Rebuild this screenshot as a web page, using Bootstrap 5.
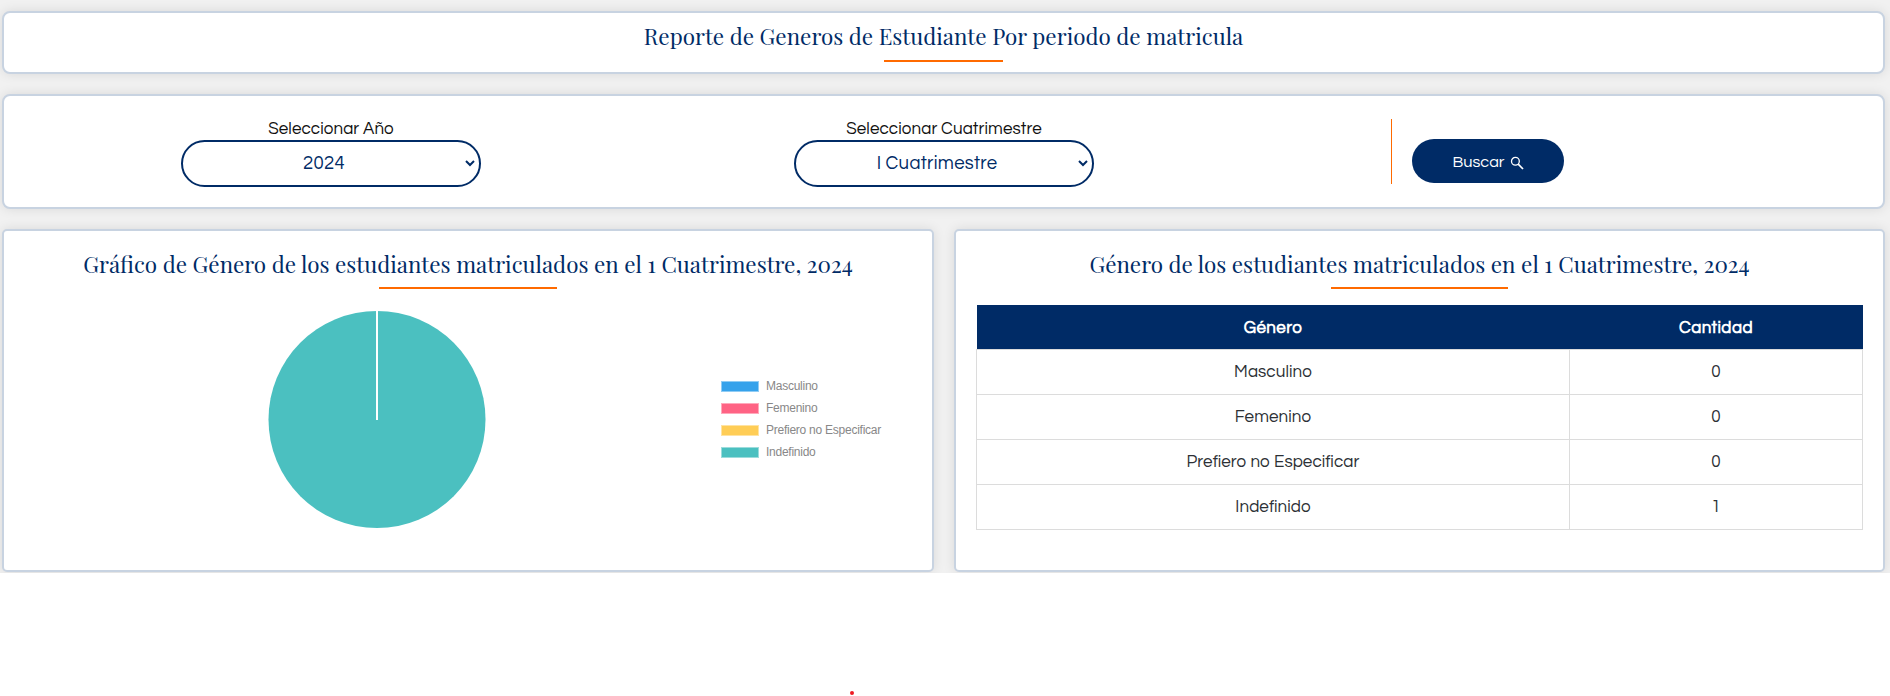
<!DOCTYPE html>
<html lang="es">
<head>
<meta charset="utf-8">
<title>Reporte de Generos</title>
<link href="https://cdn.jsdelivr.net/npm/bootstrap@5.3.0/dist/css/bootstrap.min.css" rel="stylesheet">
<style>
:root{--navy:#002b66;--accent:#ff6a00;--line:#c8d3e1}
body{font-family:"Century Gothic","URW Gothic","Questrial","Didact Gothic",Lato,"Liberation Sans",sans-serif;font-weight:300;font-size:16px;color:#212529;background:#fff;overflow:hidden}
.report{background:#f1f1f1;padding:11px 5px 1px 2px;height:573px;overflow:hidden}
.panel{background:#fff;border:2px solid var(--line);border-radius:8px;box-shadow:0 0 12px rgba(0,0,0,.1)}
.panel-title{height:63px;margin-bottom:20px;padding-top:5px}
.panel-filter{height:115px;margin-bottom:20px}
.panel-data{height:343px;border-radius:5px;padding:15px 20px 0}
.heading{font:400 22.4px/36px "Playfair Display","Liberation Serif",serif;color:var(--navy);margin:0;text-align:center;white-space:nowrap}
.rule{height:2px;background:var(--accent);margin:0 auto}
.filters{display:grid;grid-template-columns:654px 572px 1fr;height:100%}
.filters .field{padding-top:20px}
.field label{display:block;line-height:26px;height:24px;font-size:17px;letter-spacing:.1px;color:#111}
.pick{width:300px;height:47px;border:2px solid var(--navy);border-radius:24px;color:var(--navy);font-size:18.5px;letter-spacing:.3px;padding:0 4px 0 0}
.pick .value{flex:1;padding-top:1px}
.divider{width:1px;height:65px;background:var(--accent);margin-top:23px}
.btn-search{width:152px;height:44px;border-radius:22px;background:var(--navy);color:#fff;margin:43px 0 0 20px;padding:2px 0 0;font-size:16.3px;font-weight:400;border:0}
.btn-search:hover{background:#013a87;color:#fff}
.legend-list{font:300 12px/22px "Liberation Sans",sans-serif;color:#888;width:180px;letter-spacing:-.25px;margin-top:86px}
.swatch{width:38px;height:11px;margin-right:7px;border:1px solid rgba(255,255,255,.45)}
.counts{width:887px;margin:16px 0 0;border-collapse:collapse;text-align:center;table-layout:fixed}
.counts th{background:var(--navy);color:#fff;height:44px;padding:3px 0 0;font-weight:700;font-size:17px;letter-spacing:.4px;vertical-align:middle}
.counts td{border:1px solid #dcdcdc;height:45px;padding:3px 0 0;vertical-align:middle;color:#2c3035;font-size:17px;letter-spacing:.08px}
.dot{width:4px;height:4px;border-radius:50%;background:#ed1c24;margin:118px 0 0 850px}
</style>
</head>
<body>
<main class="report">
  <section class="panel panel-title">
    <h1 class="heading">Reporte de Generos de Estudiante Por periodo de matricula</h1>
    <div class="rule" style="width:119px;margin-top:6px"></div>
  </section>
  <section class="panel panel-filter">
    <div class="filters">
      <div class="field d-flex flex-column align-items-center">
        <label>Seleccionar Año</label>
        <div class="pick d-flex align-items-center text-center" role="button"><span class="value">2024</span>
          <svg width="10" height="7" viewBox="0 0 10 7" fill="none" stroke="#002b66" stroke-width="2"><path d="M1 1l4 4 4-4"/></svg></div>
      </div>
      <div class="field d-flex flex-column align-items-center">
        <label>Seleccionar Cuatrimestre</label>
        <div class="pick d-flex align-items-center text-center" role="button"><span class="value">I Cuatrimestre</span>
          <svg width="10" height="7" viewBox="0 0 10 7" fill="none" stroke="#002b66" stroke-width="2"><path d="M1 1l4 4 4-4"/></svg></div>
      </div>
      <div class="d-flex align-items-start" style="padding-left:161px">
        <div class="divider"></div>
        <button class="btn btn-search d-flex align-items-center justify-content-center" type="button">Buscar
          <svg style="margin:1px 0 0 5px" width="14" height="14" viewBox="0 0 14 14" fill="none" stroke="#fff" stroke-width="1.3"><circle cx="5.4" cy="5.2" r="3.9"/><path d="M8.2 8.1l4.8 4.9" stroke-width="1.7"/></svg></button>
      </div>
    </div>
  </section>
  <section class="d-flex justify-content-between">
    <div class="panel panel-data" style="width:932px">
      <h2 class="heading">Gráfico de Género de los estudiantes matriculados en el 1 Cuatrimestre, 2024</h2>
      <div class="rule" style="width:178px;margin-top:5px"></div>
      <div class="d-flex">
        <svg style="margin:22px 234px 0 244px" width="219" height="218" viewBox="0 0 219 218"><circle cx="109" cy="108.5" r="108.5" fill="#4bc0c0"/><path d="M109 0v109" stroke="#fff" stroke-width="2"/></svg>
        <div class="legend-list">
          <div class="d-flex align-items-center text-nowrap"><span class="swatch" style="background:#36a2eb"></span>Masculino</div>
          <div class="d-flex align-items-center text-nowrap"><span class="swatch" style="background:#ff6384"></span>Femenino</div>
          <div class="d-flex align-items-center text-nowrap"><span class="swatch" style="background:#ffcd56"></span>Prefiero no Especificar</div>
          <div class="d-flex align-items-center text-nowrap"><span class="swatch" style="background:#4bc0c0"></span>Indefinido</div>
        </div>
      </div>
    </div>
    <div class="panel panel-data" style="width:931px">
      <h2 class="heading">Género de los estudiantes matriculados en el 1 Cuatrimestre, 2024</h2>
      <div class="rule" style="width:177px;margin-top:5px"></div>
      <table class="counts">
        <colgroup><col style="width:593px"><col></colgroup>
        <thead><tr><th>Género</th><th>Cantidad</th></tr></thead>
        <tbody>
          <tr><td>Masculino</td><td>0</td></tr>
          <tr><td>Femenino</td><td>0</td></tr>
          <tr><td>Prefiero no Especificar</td><td>0</td></tr>
          <tr><td>Indefinido</td><td>1</td></tr>
        </tbody>
      </table>
    </div>
  </section>
</main>
<div class="dot"></div>
<script src="https://cdn.jsdelivr.net/npm/bootstrap@5.3.0/dist/js/bootstrap.bundle.min.js"></script>
</body>
</html>
